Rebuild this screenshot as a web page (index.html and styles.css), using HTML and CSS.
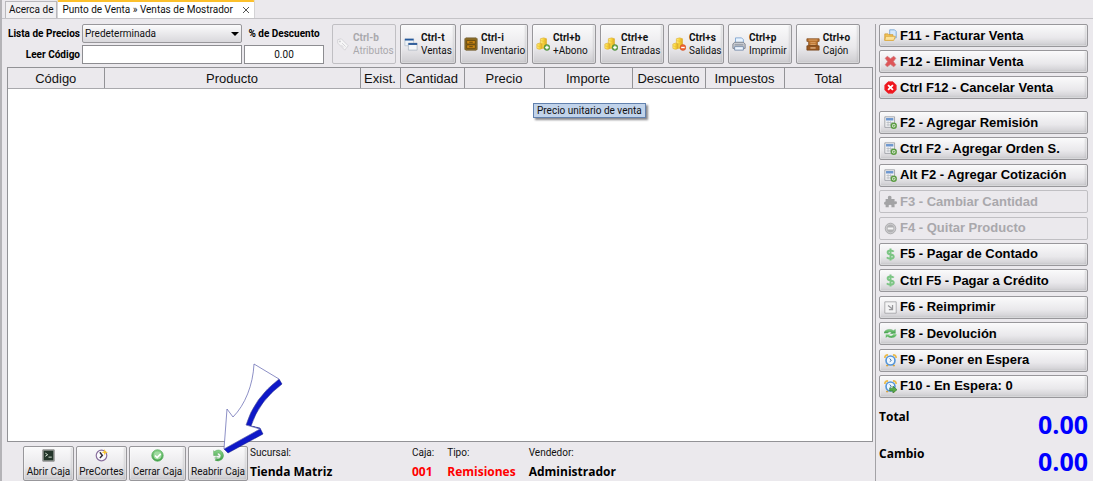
FILE: index.html
```html
<!DOCTYPE html>
<html lang="es">
<head>
<meta charset="utf-8">
<title>Punto de Venta » Ventas de Mostrador</title>
<link rel="stylesheet" href="styles.css">
</head>
<body>
<svg class="sprite" aria-hidden="true">
  <defs>
    <linearGradient id="gold" x1="0" x2="1"><stop offset="0" stop-color="#fff08a"/><stop offset=".5" stop-color="#f8d437"/><stop offset="1" stop-color="#dba520"/></linearGradient>
    <linearGradient id="green" x1="0" y1="0" x2="0" y2="1"><stop offset="0" stop-color="#8ad48a"/><stop offset="1" stop-color="#3c9e44"/></linearGradient>
  </defs>
  <symbol id="tag" viewBox="0 0 16 16"><path d="M2 3l4-1 8 8-4 5-8-8z" fill="#f6f6f7" stroke="#d0cfd3"/><circle cx="4.500" cy="5" r="1" fill="#c8c8cc"/><path d="M7 7l4 4M6 9l3 3" stroke="#d0cfd3"/></symbol>
  <symbol id="windows" viewBox="0 0 16 16"><path d="M1 2h10v8H1z" fill="#eef3f8" stroke="#b9c5d1"/><path d="M1 2h10v2H1z" fill="#24589c"/><path d="M5 7h10v8H5z" fill="#f4f6f8" stroke="#b3bcc6"/><path d="M5 7h10v2H5z" fill="#1d4f93"/></symbol>
  <symbol id="cabinet" viewBox="0 0 16 16"><path d="M1 2l1-1h12l1 1v12l-1 1H2l-1-1z" fill="#8a6a20" stroke="#76643a"/><path d="M3 4h10v4H3zM3 9h10v4H3z" fill="#c98512" stroke="#684a10"/><path d="M6 6h4M6 11h4" stroke="#59400c"/></symbol>
  <symbol id="coins" viewBox="0 0 16 16"><path d="M5 2q4-2 7 0v10q-4 2-7 0z" fill="url(#gold)" stroke="#dfb33b" stroke-width=".8"/><path d="M1 8q3-2 6 0v5q-3 2-6 0z" fill="url(#gold)" stroke="#dfb33b" stroke-width=".8"/><path d="M5 4q4 2 7 0M5 7q4 2 7 0M1 10q3 2 6 0" fill="none" stroke="#e5ba3b" stroke-width=".7"/></symbol>
  <symbol id="coins-add" viewBox="0 0 16 16"><use href="#coins"/><circle cx="12.500" cy="12" r="3.300" fill="#62a548" stroke="#3d7c30" stroke-width=".6"/><path d="M12.500 10v4M10.500 12h4" stroke="#fff" stroke-width="1.500"/></symbol>
  <symbol id="coins-del" viewBox="0 0 16 16"><use href="#coins"/><circle cx="12.500" cy="12" r="3.300" fill="#ef6533" stroke="#c94a20" stroke-width=".6"/><path d="M10.500 12h4" stroke="#fff" stroke-width="1.500"/></symbol>
  <symbol id="printer" viewBox="0 0 16 16"><path d="M4 7V1h7l2 2v4z" fill="#e7f3ff" stroke="#7ba2d0"/><path d="M1 8l2-2h10l2 2v5H1z" fill="#c9ccd3" stroke="#777d88"/><path d="M3 11h10v4H3z" fill="#eef5ff" stroke="#7389a8"/><path d="M3 9h10" stroke="#7c8390"/></symbol>
  <symbol id="register" viewBox="0 0 16 16"><path d="M1 2h14v3h-2v5H3V5H1z" fill="#b9732f" stroke="#7c4619" stroke-width=".8"/><path d="M3 3.500h10M5 6.500h6M5 8.500h6" stroke="#e0a76d"/><path d="M1 10h14v5H1z" fill="#9c5a22" stroke="#6f3d14" stroke-width=".8"/><path d="M5 12.500h6" stroke="#e5b88b" stroke-width="1.500"/></symbol>
  <symbol id="folder" viewBox="0 0 16 16"><path d="M7 1h6l2 2v8H7z" fill="#d7e9fb" stroke="#6d9fd2"/><path d="M1 6h4l1 1h5v7H1z" fill="#f3c558" stroke="#cf9a36"/><path d="M1 14l1-5h12l-2 5z" fill="#fce29a" stroke="#d9a640"/></symbol>
  <symbol id="cross" viewBox="0 0 16 16"><path d="M1.500 4L4 1.500l4 3 4-3L14.500 4l-3 4 3 4-2.500 2.500-4-3-4 3L1.500 12l3-4z" fill="#de5558" stroke="#cb7376" stroke-width=".8"/></symbol>
  <symbol id="cancel" viewBox="0 0 16 16"><path d="M5 1h6l4 4v6l-4 4H5l-4-4V5z" fill="#f0141c" stroke="#e8343a"/><path d="M5 5l6 6M11 5l-6 6" stroke="#fff" stroke-width="2.200"/></symbol>
  <symbol id="calc-add" viewBox="0 0 16 16"><path d="M1 1h12v13H1z" fill="#f0f1f3" stroke="#95999f"/><path d="M2.500 2.500h9v3h-9z" fill="#6d97cf"/><path d="M3 8h8M3 11h6M5 6.500v6M8 6.500v6" stroke="#b8bcc3"/><circle cx="12" cy="12" r="3" fill="#fff" stroke="#5b9c43" stroke-width="1.800"/><path d="M12 10.500v3M10.500 12h3" stroke="#5b9c43"/></symbol>
  <symbol id="puzzle" viewBox="0 0 16 16"><path d="M2 5h3q-1-4 2-4t2 4h4v3q3-1 3 1.500T13 11v4H9q1-3-1.500-3T6 15H2v-3q-2 0-2-2t2-2z" fill="#a3a3a5"/></symbol>
  <symbol id="minus" viewBox="0 0 16 16"><circle cx="8" cy="8" r="6.500" fill="#c9c9cb" stroke="#a4a4a6"/><circle cx="8" cy="8" r="4.500" fill="#b1b1b3"/><path d="M4.500 8h7" stroke="#f4f4f4" stroke-width="2.500"/></symbol>
  <symbol id="dollar" viewBox="0 0 16 16"><path d="M12 4.500Q10.500 3 8 3 4.500 3 4.500 5.300T8 8q4 .5 4 2.800T8 13q-3 0-4.500-1.500M8 .5v15" fill="none" stroke="#7cc584" stroke-width="2.400"/></symbol>
  <symbol id="reprint" viewBox="0 0 16 16"><path d="M1 1h14v14H1z" fill="#f3f3f4" stroke="#a0a0a3"/><path d="M5 5.500l5 4M10.500 5v5.500H6" fill="none" stroke="#98989b" stroke-width="1.500"/></symbol>
  <symbol id="refresh" viewBox="0 0 16 16"><path d="M0 7.500Q1 3 7 3q3 0 4.500 1.500L14 3v5H8l1.500-1.500Q6 5 4.500 7.500z" fill="url(#green)" stroke="#4b9854" stroke-width=".5"/><path d="M16 8.500q-1 5-7 5-3 0-4.500-1.500L2 13.500V8.800h6l-1.500 1.500Q10 11.500 11.500 8.500z" fill="url(#green)" stroke="#e9f3ea" stroke-width=".5"/></symbol>
  <symbol id="alarm" viewBox="0 0 16 16"><path d="M1 5q0-4 4-4M15 5q0-4-4-4" fill="none" stroke="#eabb4d" stroke-width="2"/><path d="M3 15l2-2M13 15l-2-2" stroke="#d6a33b" stroke-width="2"/><circle cx="8" cy="8" r="5.500" fill="#eef7ff" stroke="#5595d7" stroke-width="2"/><path d="M7 5.500L9 8 7 9.500" fill="none" stroke="#2e5d91"/></symbol>
  <symbol id="alarm-go" viewBox="0 0 16 16"><use href="#alarm"/><path d="M7 10h4V7.500l5 4.500-5 4v-2.500H7z" fill="#56ad4a" stroke="#367a34" stroke-width=".8"/></symbol>
  <symbol id="terminal" viewBox="0 0 16 16"><path d="M1 1h14v14H1z" fill="#b9bdb8" stroke="#777"/><path d="M2 2h12v12H2z" fill="#23352a"/><path d="M4 5l3 2-3 2M8 10h4" fill="none" stroke="#d5e4d5" stroke-width="1.200"/></symbol>
  <symbol id="clock" viewBox="0 0 16 16"><circle cx="8" cy="8" r="6.500" fill="#faf9fc" stroke="#8a719f" stroke-width="1.500"/><path d="M6 4l3 4-3 3" fill="none" stroke="#322c3b" stroke-width="1.800"/><path d="M12 0l1 3 3 1-3 1-1 3-1-3-3-1 3-1z" fill="#fac62e"/></symbol>
  <symbol id="check" viewBox="0 0 16 16"><circle cx="8" cy="8" r="7" fill="url(#green)" stroke="#55ad5b"/><circle cx="8" cy="8" r="4.800" fill="#a0dba2"/><path d="M5 8l2.500 2.500L12 6" fill="none" stroke="#fff" stroke-width="2"/></symbol>
  <symbol id="reopen" viewBox="0 0 16 16"><path d="M3 3q6-4 10 1 3 5-1 9-4 3-8 1l1-2q3 1 5-1 2-3 0-5Q8 4 6 6l2 2H2V2z" fill="url(#green)" stroke="#55a45a" stroke-width=".6"/><path d="M3 11h5M5 9v5" stroke="#79bd7c"/></symbol>
</svg>

<div class="app">
  <nav class="tabs">
    <button class="tab">Acerca de</button>
    <button class="tab tab-active">Punto de Venta » Ventas de Mostrador
      <svg class="close" viewBox="0 0 8 8"><path d="M1 1l6 6M7 1L1 7" stroke="#555" fill="none"/></svg>
    </button>
  </nav>

  <div class="workspace">
    <main class="sale">
      <div class="toolbar">
        <form class="lookup">
          <label for="lista">Lista de Precios</label>
          <span class="combo">
            <select id="lista"><option>Predeterminada</option></select>
            <svg class="caret" viewBox="0 0 8 4"><path d="M0 0h8L4 4z"/></svg>
          </span>
          <label class="center" for="descuento">% de Descuento</label>
          <label for="codigo">Leer Código</label>
          <input id="codigo" type="text">
          <input id="descuento" class="center" type="text" value="0.00">
        </form>
        <div class="actions">
          <button class="action" disabled><svg><use href="#tag"/></svg><span><b>Ctrl-b</b><br>Atributos</span></button>
          <button class="action narrow"><svg><use href="#windows"/></svg><span><b>Ctrl-t</b><br>Ventas</span></button>
          <button class="action wide"><svg><use href="#cabinet"/></svg><span><b>Ctrl-i</b><br>Inventario</span></button>
          <button class="action"><svg><use href="#coins-add"/></svg><span><b>Ctrl+b</b><br>+Abono</span></button>
          <button class="action"><svg><use href="#coins-add"/></svg><span><b>Ctrl+e</b><br>Entradas</span></button>
          <button class="action narrow"><svg><use href="#coins-del"/></svg><span><b>Ctrl+s</b><br>Salidas</span></button>
          <button class="action"><svg><use href="#printer"/></svg><span><b>Ctrl+p</b><br>Imprimir</span></button>
          <button class="action center"><svg><use href="#register"/></svg><span><b>Ctrl+o</b><br>Cajón</span></button>
        </div>
      </div>

      <div class="lines">
        <table>
          <colgroup><col class="c-code"><col><col class="c-stock"><col class="c-qty"><col class="c-price"><col class="c-amount"><col class="c-disc"><col class="c-tax"><col class="c-total"></colgroup>
          <thead><tr><th>Código</th><th>Producto</th><th>Exist.</th><th>Cantidad</th><th>Precio</th><th>Importe</th><th>Descuento</th><th>Impuestos</th><th>Total</th></tr></thead>
        </table>
        <div class="tooltip" role="tooltip">Precio unitario de venta</div>
      </div>

      <footer class="status">
        <div class="register">
          <button class="till"><svg><use href="#terminal"/></svg>Abrir Caja</button>
          <button class="till"><svg><use href="#clock"/></svg>PreCortes</button>
          <button class="till till-mid"><svg><use href="#check"/></svg>Cerrar Caja</button>
          <button class="till till-wide"><svg><use href="#reopen"/></svg>Reabrir Caja</button>
          <svg class="pointer" viewBox="0 0 60 90" aria-hidden="true">
            <path d="M57 16l3 5Q37 38 29 63l9 2 3 6L6 90l-4-4 34-21-12-3Q32 35 57 16z" fill="#0e18c8" stroke="#10187e" stroke-width=".5"/>
            <path d="M32 1l25 15Q32 35 24 62l14 4L2 86 5 46l6 8C23 42 31 22 32 1z" fill="#fff" stroke="#5b60ad" stroke-width=".7"/>
          </svg>
        </div>
        <dl class="facts">
          <div class="branch"><dt>Sucursal:</dt><dd>Tienda Matriz</dd></div>
          <div><dt>Caja:</dt><dd class="alert">001</dd></div>
          <div><dt>Tipo:</dt><dd class="alert">Remisiones</dd></div>
          <div><dt>Vendedor:</dt><dd>Administrador</dd></div>
        </dl>
      </footer>
    </main>

    <aside class="side">
      <div class="group">
        <button class="cmd"><svg><use href="#folder"/></svg>F11 - Facturar Venta</button>
        <button class="cmd"><svg><use href="#cross"/></svg>F12 - Eliminar Venta</button>
        <button class="cmd"><svg><use href="#cancel"/></svg>Ctrl F12 - Cancelar Venta</button>
      </div>
      <div class="group group-fill">
        <button class="cmd"><svg><use href="#calc-add"/></svg>F2 - Agregar Remisión</button>
        <button class="cmd"><svg><use href="#calc-add"/></svg>Ctrl F2 - Agregar Orden S.</button>
        <button class="cmd"><svg><use href="#calc-add"/></svg>Alt F2 - Agregar Cotización</button>
        <button class="cmd" disabled><svg><use href="#puzzle"/></svg>F3 - Cambiar Cantidad</button>
        <button class="cmd" disabled><svg><use href="#minus"/></svg>F4 - Quitar Producto</button>
        <button class="cmd"><svg><use href="#dollar"/></svg>F5 - Pagar de Contado</button>
        <button class="cmd"><svg><use href="#dollar"/></svg>Ctrl F5 - Pagar a Crédito</button>
        <button class="cmd"><svg><use href="#reprint"/></svg>F6 - Reimprimir</button>
        <button class="cmd"><svg><use href="#refresh"/></svg>F8 - Devolución</button>
        <button class="cmd"><svg><use href="#alarm"/></svg>F9 - Poner en Espera</button>
        <button class="cmd"><svg><use href="#alarm-go"/></svg>F10 - En Espera: 0</button>
      </div>
      <dl class="totals">
        <div><dt>Total</dt><dd>0.00</dd></div>
        <div><dt>Cambio</dt><dd>0.00</dd></div>
      </dl>
    </aside>
  </div>
</div>
</body>
</html>
```

FILE: styles.css
```css
* { box-sizing: border-box; }

:root {
  --bg: #ebe9ed;
  --ui: Roboto, "Open Sans", sans-serif;
  --ui-strong: "Open Sans", "Noto Sans", sans-serif;
}

body {
  margin: 0;
  background: var(--bg);
  color: #111;
  font: 10px/14px var(--ui);
}

button, input, select { font: inherit; color: inherit; margin: 0; }
dl, dd { margin: 0; }
.sprite { position: absolute; width: 0; height: 0; }

.app {
  display: flex;
  flex-direction: column;
  min-height: 100vh;
  border-left: 2px solid #b4b3b7;
}

.tabs {
  display: flex;
  align-items: flex-end;
  height: 19px;
  padding-left: 3px;
  border-bottom: 1px solid #c4c3c7;
}

.tab {
  display: flex;
  align-items: center;
  height: 17px;
  padding: 0 3px;
  border: 1px solid #b9b8bc;
  border-bottom: 0;
  background: #f1f0f2;
  white-space: nowrap;
}

.tab-active {
  gap: 9px;
  height: 18px;
  padding: 0 4px;
  border-color: #d4d3d6;
  border-top: 2px solid #fcc02c;
  border-radius: 2px 2px 0 0;
  background: #fff;
}

.close { width: 8px; height: 8px; }

.workspace {
  flex: 1;
  display: flex;
  padding-top: 5px;
}

.sale {
  flex: 1;
  display: flex;
  flex-direction: column;
  padding: 0 2px 0 5px;
}

.toolbar { display: flex; gap: 8px; height: 43px; }

.lookup {
  display: grid;
  grid-template-columns: 73px 160px 80px;
  grid-template-rows: 19px 19px;
  gap: 2px;
  align-items: center;
}

.lookup label {
  color: #000;
  font-weight: bold;
  text-align: right;
  white-space: nowrap;
}

.lookup .center { text-align: center; }

.lookup input {
  width: 100%;
  height: 19px;
  padding: 0 3px;
  border: 1px solid #8d8d91;
  background: #fff;
}

.combo { display: grid; align-items: center; }
.combo > * { grid-area: 1 / 1; }

.combo select {
  appearance: none;
  width: 100%;
  height: 19px;
  padding: 0 2px;
  border: 1px solid #98979b;
  border-radius: 2px;
  background: linear-gradient(#fbfbfc, #d9d8dc);
}

.caret { justify-self: end; width: 8px; height: 4px; margin-right: 3px; pointer-events: none; }

.actions { display: flex; gap: 4px; }

.action, .till, .cmd {
  border: 1px solid #98979b;
  border-radius: 2px;
  background: linear-gradient(#fafafb, #e9e8eb 60%, #cdccd0);
  box-shadow: inset 0 0 0 1px #ffffff55, inset -2px -1px 2px #a5a5a955;
  white-space: nowrap;
}

.action {
  display: flex;
  align-items: center;
  gap: 3px;
  width: 64px;
  height: 40px;
  padding: 0 3px;
  line-height: 13px;
  text-align: left;
}

.action svg { flex: none; width: 14px; height: 14px; }
.action.narrow { width: 56px; }
.action.wide { width: 68px; }
.action.center { justify-content: center; }

button:disabled {
  border-color: #c0bfc3;
  background: var(--bg);
  box-shadow: none;
  color: #a9a8ac;
}

.lines {
  position: relative;
  flex: 1;
  border: 1px solid #929296;
  background: #fff;
}

table {
  width: 100%;
  table-layout: fixed;
  border-collapse: collapse;
}

th {
  height: 20px;
  padding: 2px 0 0;
  border-right: 1px solid #929296;
  border-bottom: 1px solid #a9a9ad;
  background: var(--bg);
  font: 13px/16px "Liberation Sans", Arial, sans-serif;
}

th:last-child { border-right: 0; }
.c-code { width: 96px; }
.c-stock { width: 40px; }
.c-qty { width: 64px; }
.c-price { width: 80px; }
.c-amount { width: 88px; }
.c-disc { width: 73px; }
.c-tax { width: 79px; }
.c-total { width: 88px; }

.tooltip {
  position: absolute;
  top: 35px;
  left: 525px;
  padding: 0 3px;
  border: 1px solid #6181ae;
  background: #c1d3ea;
  box-shadow: 2px 2px 2px #88888c;
  line-height: 13px;
}

.status { display: flex; gap: 2px; height: 39px; padding: 4px 0 0 16px; }

.register { position: relative; display: flex; gap: 2px; }

.till {
  display: flex;
  flex-direction: column;
  align-items: center;
  justify-content: space-between;
  width: 51px;
  height: 35px;
  padding: 2px 0 1px;
}

.till svg { width: 13px; height: 13px; }
.till-mid { width: 57px; }
.till-wide { width: 60px; }

.pointer {
  position: absolute;
  right: -34px;
  bottom: 28px;
  width: 60px;
  height: 90px;
  overflow: visible;
  pointer-events: none;
}

.facts { display: flex; gap: 13px; }
.facts .branch { min-width: 149px; }
.facts dd { padding-top: 3px; font: bold 12px/18px var(--ui-strong); color: #000; }
.facts .alert { color: #f00; }

.side {
  display: flex;
  flex-direction: column;
  gap: 12px;
  width: 218px;
  padding: 0 5px 0 3px;
  border-left: 1px solid #a3a2a6;
}

.group { display: flex; flex-direction: column; gap: 3px; }
.group-fill { flex: 1; justify-content: space-between; }

.cmd {
  display: flex;
  align-items: center;
  gap: 3px;
  height: 23px;
  padding: 0 4px;
  font: bold 13px/16px "Liberation Sans", Arial, sans-serif;
  color: #000;
}

.cmd svg { flex: none; width: 13px; height: 13px; }

.totals { height: 71px; color: #000; }
.totals div { display: flex; justify-content: space-between; height: 37px; }
.totals dt { font: bold 12px/14px var(--ui-strong); }
.totals dd { font: bold 25px/28px var(--ui-strong); color: #00f; }
```
